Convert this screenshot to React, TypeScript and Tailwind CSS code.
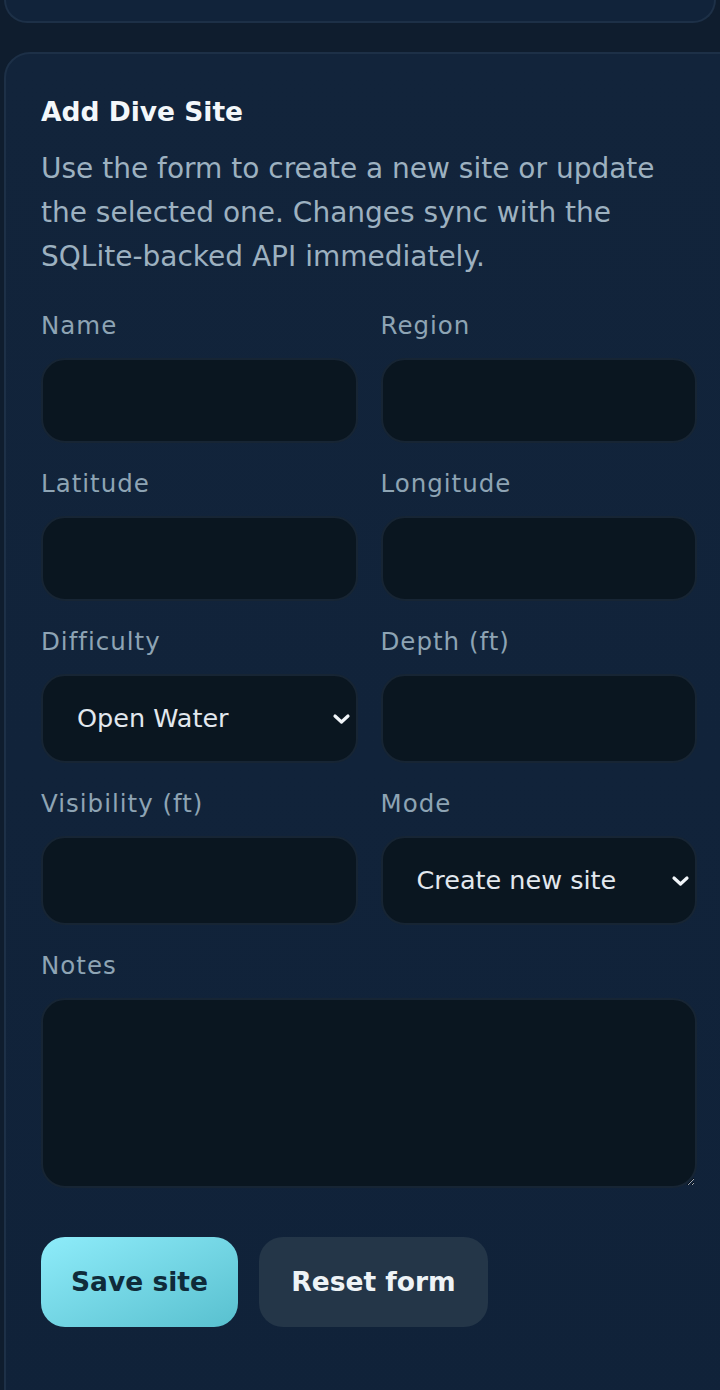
import React from 'react';

const font = { fontFamily: '"DejaVu Sans", Inter, sans-serif' };

function Chevron() {
  return (
    <svg
      className="pointer-events-none absolute right-[7px] top-1/2 -translate-y-1/2"
      width="19"
      height="12"
      viewBox="0 0 19 12"
      fill="none"
    >
      <path d="M3 3l6.5 6 6.5-6" stroke="#f1f5f9" strokeWidth="3.2" strokeLinecap="round" strokeLinejoin="round" />
    </svg>
  );
}

function Field({ label, children }: { label: string; children: React.ReactNode }) {
  return (
    <label className="flex flex-col gap-[14px]">
      <span className="text-[24.5px] leading-[36px] tracking-[1px] text-[#8ea4b4]">{label}</span>
      {children}
    </label>
  );
}

const inputCls =
  'w-full flex-1 min-h-[85px] rounded-[24px] border-2 border-[#172534] bg-[#0a1620] px-[34px] text-[25px] text-[#e2e8ee] outline-none';

function Select({ value, options }: { value: string; options: string[] }) {
  return (
    <div className="relative flex-1 flex">
      <select
        defaultValue={value}
        className="w-full h-[89px] appearance-none rounded-[24px] border-2 border-[#172534] bg-[#0a1620] pl-[34px] pr-[40px] text-[25.5px] text-[#e2e8ee] outline-none"
      >
        {options.map((o) => (
          <option key={o}>{o}</option>
        ))}
      </select>
      <Chevron />
    </div>
  );
}

export default function App() {
  return (
    <div className="w-[720px] h-[1390px] overflow-hidden bg-[#0f1d2e]" style={font}>
      <div className="ml-[4px] w-[712px] h-[23px] rounded-b-[24px] border-x-2 border-b-2 border-[#1d3047] bg-[#11233a]" />
      <div className="ml-[4px] mt-[29px] w-[740px] h-[1400px] rounded-[26px] border-2 border-[#1d3047] bg-gradient-to-b from-[#12243b] to-[#102239] pl-[35px] pr-[58px] pt-[38px]">
        <h2 className="text-[26.5px] leading-[40px] font-bold text-[#f3f7fa]">Add Dive Site</h2>
        <p className="mt-[15px] w-[655px] text-[28px] leading-[44px] text-[#9db1c0]">
          Use the form to create a new site or update the selected one. Changes sync with the SQLite-backed API
          immediately.
        </p>

        <div className="mt-[29px] grid grid-cols-2 gap-x-[23px] gap-y-[23px] w-[656px]">
          <Field label="Name">
            <input className={inputCls} />
          </Field>
          <Field label="Region">
            <input className={inputCls} />
          </Field>
          <Field label="Latitude">
            <input className={inputCls} />
          </Field>
          <Field label="Longitude">
            <input className={inputCls} />
          </Field>
          <Field label="Difficulty">
            <Select value="Open Water" options={['Open Water', 'Advanced', 'Technical']} />
          </Field>
          <Field label="Depth (ft)">
            <input className={inputCls} />
          </Field>
          <Field label="Visibility (ft)">
            <input className={inputCls} />
          </Field>
          <Field label="Mode">
            <Select value="Create new site" options={['Create new site', 'Update selected site']} />
          </Field>
          <div className="col-span-2">
            <Field label="Notes">
              <textarea className="w-full h-[190px] rounded-[24px] border-2 border-[#172534] bg-[#0a1620] px-[34px] py-[20px] text-[25px] text-[#e2e8ee] outline-none" />
            </Field>
          </div>
        </div>

        <div className="mt-[49px] flex gap-[21px]">
          <button className="h-[90px] w-[197px] rounded-[24px] bg-gradient-to-br from-[#8eecfa] to-[#58c0cf] text-[26.5px] font-bold text-[#0f2b3a]">
            Save site
          </button>
          <button className="h-[90px] w-[229px] rounded-[24px] bg-[#243648] text-[26.5px] font-bold text-[#eef3f6]">
            Reset form
          </button>
        </div>
      </div>
    </div>
  );
}
